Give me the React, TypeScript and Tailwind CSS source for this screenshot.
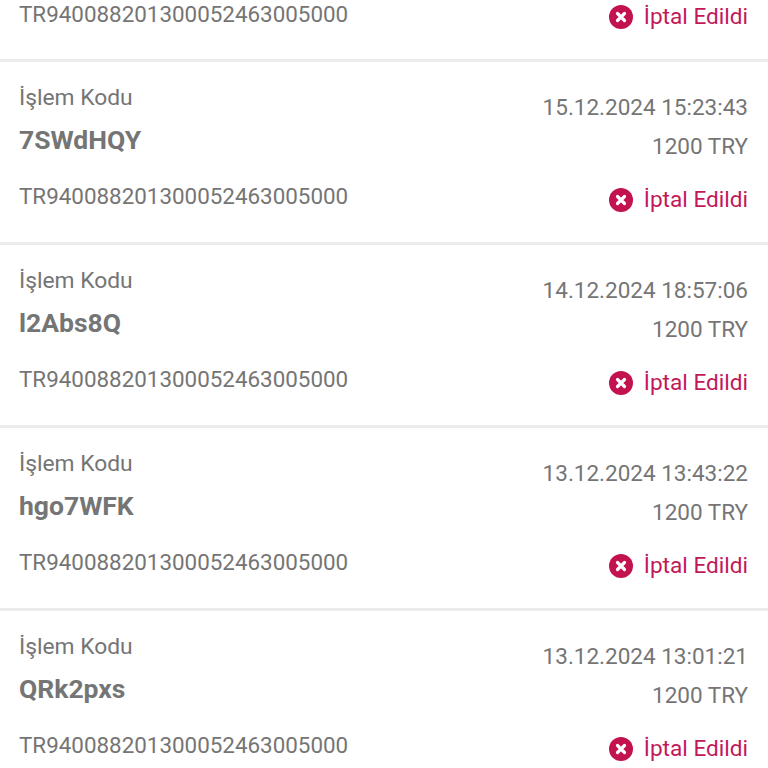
const rows = [
  { code: '7SWdHQY', date: '15.12.2024 15:23:43' },
  { code: 'l2Abs8Q', date: '14.12.2024 18:57:06' },
  { code: 'hgo7WFK', date: '13.12.2024 13:43:22' },
  { code: 'QRk2pxs', date: '13.12.2024 13:01:21' },
]

const iban = 'TR940088201300052463005000'

function Status() {
  return (
    <div className="flex items-center gap-[11px] text-[22.6px] leading-[28px] text-[#c2185b]">
      <svg width="24" height="24" viewBox="0 0 24 24" className="shrink-0">
        <circle cx="12" cy="12" r="12" fill="#c2124f" />
        <path d="M8.5 8.5l7 7M15.5 8.5l-7 7" stroke="#fff" strokeWidth="3.2" strokeLinecap="round" />
      </svg>
      <span>İptal Edildi</span>
    </div>
  )
}

function Row({ code, date }: { code: string; date: string }) {
  return (
    <div className="flex h-[183px] justify-between border-b-[3px] border-[#ececec] pl-[19px] pr-[20px]">
      <div className="flex flex-col pt-[21px]">
        <div className="text-[22.8px] leading-[30px]">İşlem Kodu</div>
        <div className="mt-[12px] text-[26.5px] leading-[30px] font-bold">{code}</div>
        <div className="mt-[27px] text-[22.4px] leading-[28px]">{iban}</div>
      </div>
      <div className="flex flex-col items-end pt-[31px]">
        <div className="text-[22.5px] leading-[28px]">{date}</div>
        <div className="mt-[11px] text-[22.5px] leading-[28px]">1200 TRY</div>
        <div className="mt-[26px]">
          <Status />
        </div>
      </div>
    </div>
  )
}

export default function App() {
  return (
    <div className="h-[768px] overflow-hidden bg-white font-['Roboto',sans-serif] text-[#757575]">
      <div className="flex h-[62px] justify-between border-b-[3px] border-[#ececec] pl-[19px] pr-[20px]">
        <div className="text-[22.4px] leading-[28px]">{iban}</div>
        <div className="-mt-[1px] h-[28px] pt-[4px]">
          <Status />
        </div>
      </div>
      {rows.map((r) => (
        <Row key={r.code} code={r.code} date={r.date} />
      ))}
    </div>
  )
}
